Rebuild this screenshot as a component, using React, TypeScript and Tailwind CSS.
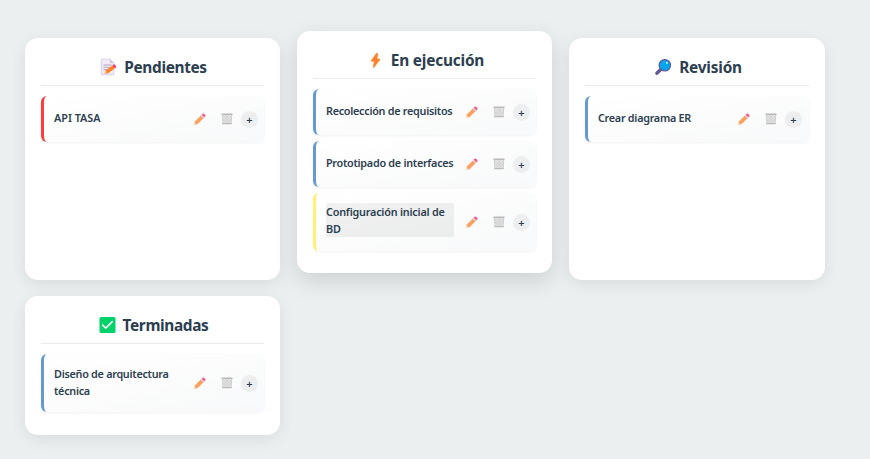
import React from "react";

function PencilIcon() {
  return (
    <svg width="13" height="13" viewBox="0 0 13 13" className="opacity-80">
      <path d="M.6 12.2 1.5 9.1 3.8 11.4Z" fill="#f5d3a6" />
      <path d="M1.3 9.1 7.8 2.4 10.6 5.2 3.9 11.7Z" fill="#ff8a3c" />
      <path d="M7.8 2.4 8.8 1.4 11.6 4.2 10.6 5.2Z" fill="#d9cfe4" />
      <path d="M8.6 1.6 9.6.7Q10.5.2 11.3.9L12.2 1.8Q12.8 2.6 12.2 3.4L11.3 4.4Z" fill="#f8316f" />
    </svg>
  );
}

function TrashIcon() {
  return (
    <svg width="12" height="12" viewBox="0 0 12 12" className="opacity-80">
      <path d="M1 1.5H11L10.3 11H1.7Z" fill="#dedede" />
      <path d="M1.2 1.5 2 11M10.8 1.5 10 11" stroke="#bcbcbc" strokeWidth=".8" />
      <path d="m2 3 7.5 7M2.2 6 6.2 10M4 2 10 7.5M10 3 2.6 10M9.8 6 6 10M8 2 2.4 7.5" stroke="#b9b9b9" strokeWidth=".5" />
      <path d="M.5.5H11.5V2H.5ZM1.4 10H10.6V11.3H1.4Z" fill="#ababab" />
    </svg>
  );
}

function MemoIcon() {
  return (
    <svg width="17" height="18" viewBox="0 0 17 18">
      <path d="M2 1.2H9.8L13.8 5V16.2Q13.8 16.8 13.2 16.8H2Q1.2 16.8 1.2 16V2Q1.2 1.2 2 1.2Z" fill="#f0eaf6" stroke="#d2c8dc" strokeWidth=".8" />
      <path d="M9.8 1.2V5H13.8Z" fill="#cfc4dc" />
      <path d="M3.5 7H11.5M3.5 9.3H10M3.5 11.6H7.5" stroke="#a396b3" strokeWidth=".8" />
      <path d="m4.7 15.7 1.3-3.5L13 7l2.3 3.1-7.2 5.2Z" fill="#ff8228" />
      <path d="m4.7 15.7 1-2.8 1.8 2.5Z" fill="#f4b678" />
      <path d="m12.7 7.2 1-.7q.7-.4 1.2.2L16 8.2q.5.7-.1 1.2l-1 .8Z" fill="#f8316f" />
    </svg>
  );
}

function BoltIcon() {
  return (
    <svg width="17" height="18" viewBox="0 0 17 18">
      <path d="M9.3 2.4 4.2 9.5q-.4.8.4.8h2.6L6.2 16q0 1.1.9.3l5.8-7.6q.4-.8-.4-.8H10l.8-5q0-1.4-1.5-.5Z" fill="#ff822d" stroke="#ff822d" strokeWidth=".5" />
    </svg>
  );
}

function SearchIcon() {
  return (
    <svg width="18" height="18" viewBox="0 0 18 18">
      <path d="m6.5 11.7-3.7 3.5" stroke="#635994" strokeWidth="3.3" strokeLinecap="round" />
      <circle cx="10.8" cy="7.3" r="5.7" fill="#00a6ed" stroke="#635994" strokeWidth="1.2" />
      <ellipse cx="12.8" cy="4.8" rx="1.2" ry=".9" transform="rotate(35 12.8 4.8)" fill="#d3f1ff" />
    </svg>
  );
}

function CheckIcon() {
  return (
    <svg width="17" height="18" viewBox="0 0 17 18">
      <rect x=".5" y="1" width="16" height="16" rx="1.6" fill="#00d26a" />
      <path d="m3.7 9.2 3 3 6.5-6.5" fill="none" stroke="#f4f4f4" strokeWidth="1.7" strokeLinecap="round" strokeLinejoin="round" />
    </svg>
  );
}

type Task = { text: string; accent: string; tracking?: string; offset?: string; highlighted?: boolean };

function TaskRow({ task }: { task: Task }) {
  return (
    <li className={`flex min-h-[46px] items-center rounded-[6px] border-l-[3px] bg-linear-to-br from-white to-[#f8f9fa] pt-[11px] pr-[7px] pb-[13px] pl-[10px] shadow-[0_1px_3px_rgba(0,0,0,0.06)] ${task.accent}`}>
      <span className={`w-32 shrink-0 rounded-[2px] text-[10.8px] leading-[17px] font-semibold ${task.tracking ?? "tracking-[-0.27px]"} ${task.offset ?? "-mt-px mb-px"} ${task.highlighted ? "bg-linear-to-br from-[#f1f1f1] to-[#ebecec]" : ""}`}>
        {task.text}
      </span>
      <button className="mt-[2px] ml-[11px] shrink-0" aria-label="Editar"><PencilIcon /></button>
      <button className="mt-px ml-[15px] shrink-0" aria-label="Eliminar"><TrashIcon /></button>
      <button className="mt-[2px] ml-2 flex size-[17px] shrink-0 items-center justify-center rounded-full bg-[#eceeef] text-[11px] leading-none font-semibold">+</button>
    </li>
  );
}

function Column({ title, icon, tasks, titleClass, className }: { title: string; icon: React.ReactNode; tasks: Task[]; titleClass: string; className: string }) {
  return (
    <section className={`rounded-[13px] bg-white px-4 pt-4 ${className}`}>
      <h2 className="flex h-8 items-start justify-center gap-[7px] border-b border-[#e9ecee] pl-[2px] text-[15.4px] leading-[28px] font-bold">
        <span className="mt-[4px]">{icon}</span>
        <span className={`whitespace-nowrap ${titleClass}`}>{title}</span>
      </h2>
      <ul className="mt-[10px] flex flex-col gap-[6px]">
        {tasks.map((task) => <TaskRow key={task.text} task={task} />)}
      </ul>
    </section>
  );
}

export default function App() {
  return (
    <main className="grid h-[459px] w-[870px] grid-cols-[255px_255px_256px] grid-rows-[242px_139px] content-start gap-x-[17px] gap-y-4 overflow-hidden bg-[#ebeff0] pt-[38px] pl-[25px] font-['Noto_Sans',sans-serif] text-[#2c3e50]">
      <Column title="Pendientes" icon={<MemoIcon />} titleClass="tracking-[-0.35px]" className="shadow-[0_4px_16px_rgba(0,0,0,0.08)]" tasks={[{ text: "API TASA", accent: "border-[#ff3b3b]", tracking: "tracking-[0px]" }]} />
      <Column title="En ejecución" icon={<BoltIcon />} titleClass="tracking-[-0.2px]" className="-translate-y-[7px] shadow-[0_8px_24px_rgba(0,0,0,0.13)]" tasks={[
        { text: "Recolección de requisitos", accent: "border-[#6699cf]" },
        { text: "Prototipado de interfaces", accent: "border-[#6699cf]" },
        { text: "Configuración inicial de BD", accent: "border-[#fff176]", highlighted: true, tracking: "tracking-[-0.2px]" },
      ]} />
      <Column title="Revisión" icon={<SearchIcon />} titleClass="tracking-[-0.2px]" className="shadow-[0_4px_16px_rgba(0,0,0,0.08)]" tasks={[{ text: "Crear diagrama ER", accent: "border-[#6699cf]" }]} />
      <Column title="Terminadas" icon={<CheckIcon />} titleClass="tracking-[-0.35px]" className="shadow-[0_4px_16px_rgba(0,0,0,0.08)]" tasks={[{ text: "Diseño de arquitectura técnica", accent: "border-[#6699cf]", offset: "mt-0" }]} />
    </main>
  );
}
